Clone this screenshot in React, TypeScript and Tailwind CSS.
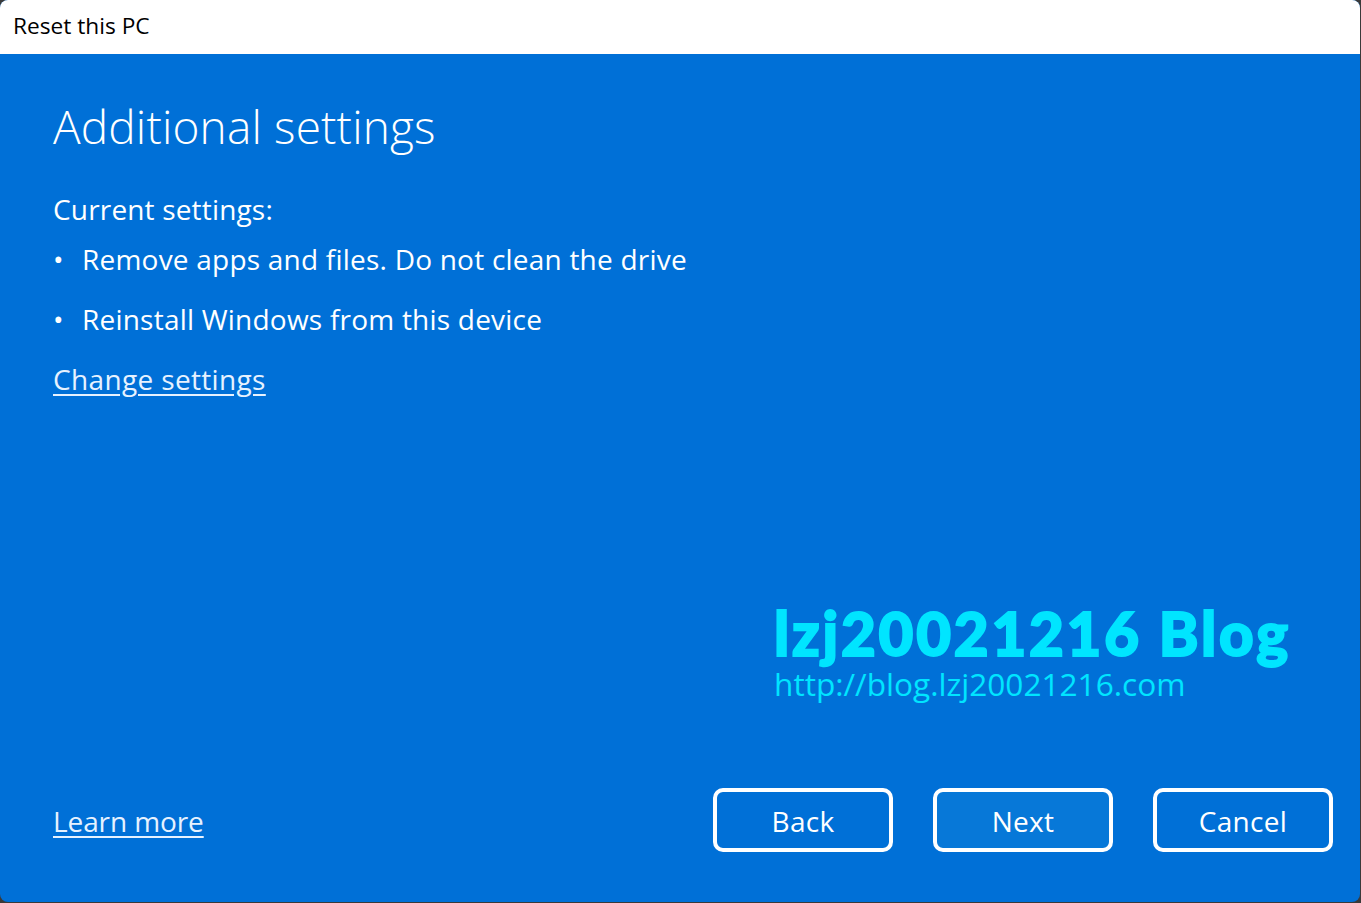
export default function App() {
  const font = { fontFamily: '"Open Sans", sans-serif' };
  return (
    <div className="w-[1361px] h-[903px] bg-[#3a3a3a] overflow-hidden" style={font}>
      <div className="relative w-[1360px] h-[902px] rounded-lg overflow-hidden flex flex-col bg-[#0070d7]">
        <div className="h-[54px] bg-white flex items-center pl-[13px] pb-[1px] text-[22.7px] text-black">Reset this PC</div>
        <div className="flex-1 flex flex-col pl-[53px] pr-[27px] text-white">
          <h1 className="mt-[43px] text-[46px] leading-[58px] font-light tracking-[0.15px]">Additional settings</h1>
          <p className="mt-[36px] text-[28px] leading-[36px] tracking-[0.17px]">Current settings:</p>
          <ul className="mt-[14px] flex flex-col gap-[24px] text-[28px] leading-[36px] tracking-[0.22px]">
            <li className="flex"><span className="w-[29px]">•</span>Remove apps and files. Do not clean the drive</li>
            <li className="flex"><span className="w-[29px]">•</span>Reinstall Windows from this device</li>
          </ul>
          <a className="mt-[24px] text-[28px] leading-[36px] underline underline-offset-4 tracking-[0.35px] text-[#e6f2ff] self-start">Change settings</a>
          <div className="mt-auto mb-[50px] flex items-center justify-between">
            <a className="pt-[2px] text-[28px] leading-[36px] underline underline-offset-4 tracking-[-0.1px] text-[#e6f2ff]">Learn more</a>
            <div className="flex gap-[40px] tracking-[0.3px]">
              <button className="w-[180px] h-[64px] pt-[1px] rounded-[10px] border-[4px] border-white text-[28px]">Back</button>
              <button className="w-[180px] h-[64px] pt-[1px] rounded-[10px] border-[4px] border-white bg-[#0778d8] text-[28px]">Next</button>
              <button className="w-[180px] h-[64px] pt-[1px] rounded-[10px] border-[4px] border-white text-[28px]">Cancel</button>
            </div>
          </div>
        </div>
        <div className="absolute left-[774px] top-[604px] text-[#00e5ff]">
          <div className="text-[60px] leading-[58px] font-black whitespace-nowrap tracking-[2.8px] [-webkit-text-stroke:2px_#00e5ff]" style={{ fontFamily: 'Lato, sans-serif' }}>lzj20021216 Blog</div>
          <div className="mt-[5px] text-[31.6px] leading-[34px] whitespace-nowrap">http://blog.lzj20021216.com</div>
        </div>
      </div>
    </div>
  );
}
